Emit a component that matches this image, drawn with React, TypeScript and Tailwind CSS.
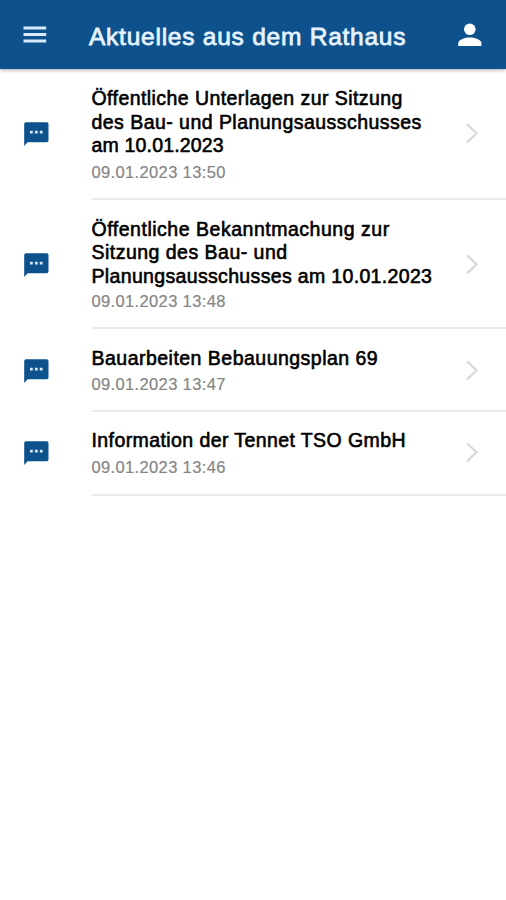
import React from "react";

type Line = { text: string; spacing: string };
type Entry = { lines: Line[]; date: string; row: string; body: string; side: string; dateGap: string };

const entries: Entry[] = [
  {
    lines: [
      { text: "Öffentliche Unterlagen zur Sitzung", spacing: "tracking-[0.43px]" },
      { text: "des Bau- und Planungsausschusses", spacing: "tracking-[0.46px]" },
      { text: "am 10.01.2023", spacing: "tracking-[0.17px]" },
    ],
    date: "09.01.2023 13:50",
    row: "h-[131px]",
    body: "pt-[18px]",
    side: "pt-[53px]",
    dateGap: "mt-[4px]",
  },
  {
    lines: [
      { text: "Öffentliche Bekanntmachung zur", spacing: "tracking-[0.52px]" },
      { text: "Sitzung des Bau- und", spacing: "tracking-[0.48px]" },
      { text: "Planungsausschusses am 10.01.2023", spacing: "tracking-[0.34px]" },
    ],
    date: "09.01.2023 13:48",
    row: "h-[129px]",
    body: "pt-[17.5px]",
    side: "pt-[53px]",
    dateGap: "mt-[2.5px]",
  },
  {
    lines: [{ text: "Bauarbeiten Bebauungsplan 69", spacing: "tracking-[0.48px]" }],
    date: "09.01.2023 13:47",
    row: "h-[83px]",
    body: "pt-[18px]",
    side: "pt-[30px]",
    dateGap: "mt-[3px]",
  },
  {
    lines: [{ text: "Information der Tennet TSO GmbH", spacing: "tracking-[0.41px]" }],
    date: "09.01.2023 13:46",
    row: "h-[84px]",
    body: "pt-[17px]",
    side: "pt-[29px]",
    dateGap: "mt-[4px]",
  },
];

function MessageIcon() {
  return (
    <svg width="25" height="25" viewBox="0 0 25 25" className="block">
      <path d="M2 0.3H22.8a1.7 1.7 0 0 1 1.7 1.7V18.6a1.7 1.7 0 0 1-1.7 1.7H3.6L0.2 24V2A1.8 1.8 0 0 1 2 0.3Z" fill="#0d528d" />
      <path d="M6 8.8h2.8v2.7H6zM10.9 8.8h2.8v2.7h-2.8zM15.8 8.8h2.8v2.7h-2.8z" fill="#d9e8f6" />
    </svg>
  );
}

function Chevron() {
  return (
    <svg width="14" height="22" viewBox="0 0 14 22" className="block">
      <path d="M1 2.2L10.5 11.3L1 20.4" fill="none" stroke="#d8d8d8" strokeWidth="2.2" />
    </svg>
  );
}

export default function App() {
  return (
    <div className="flex h-[900px] w-[506px] flex-col overflow-hidden bg-white font-['Liberation_Sans',Arial,sans-serif]">
      <header className="relative flex h-[69px] shrink-0 items-start bg-[#0d528d] text-white shadow-[0_1px_4px_rgba(0,0,0,0.35)]">
        <svg width="24" height="18" viewBox="0 0 24 18" className="mt-[26px] ml-[23px] shrink-0">
          <path d="M0.5 0.5h22.7v3H0.5zM0.5 7h22.7v3H0.5zM0.5 13.4h22.7v3H0.5z" fill="#d9eafa" />
        </svg>
        <h1 className="mt-[23px] ml-[42px] grow text-[24.5px] leading-[28px] font-normal tracking-[0.76px] whitespace-nowrap text-[#e6f3ff] [-webkit-text-stroke:0.8px_#e6f3ff]">
          Aktuelles aus dem Rathaus
        </h1>
        <svg width="24" height="24" viewBox="0 0 24 24" className="mt-[23px] mr-[24px] shrink-0">
          <circle cx="11.8" cy="6.3" r="5.8" fill="#fff" />
          <path d="M0.2 23V20.4C0.2 16.6 7.6 14.6 11.8 14.6S23.5 16.6 23.5 20.4V23Z" fill="#fff" />
        </svg>
      </header>
      <main>
        {entries.map((entry) => (
          <article key={entry.date} className={`flex items-stretch ${entry.row}`}>
            <div className={`w-[92px] shrink-0 pl-[24px] ${entry.side}`}>
              <MessageIcon />
            </div>
            <div className="flex grow border-b-2 border-[#ebebeb]">
              <div className={`-ml-[0.5px] w-[374.5px] shrink-0 ${entry.body}`}>
                <h2 className="text-[19.5px] leading-[23.5px] font-normal text-black [-webkit-text-stroke:0.6px_black]">
                  {entry.lines.map((line) => (
                    <span key={line.text} className={`block w-fit whitespace-nowrap ${line.spacing}`}>
                      {line.text}
                    </span>
                  ))}
                </h2>
                <p className={`w-fit text-[16.5px] leading-[20px] tracking-[0.36px] text-[#858585] [-webkit-text-stroke:0.2px_#858585] ${entry.dateGap}`}>
                  {entry.date}
                </p>
              </div>
              <div className={entry.side}>
                <Chevron />
              </div>
            </div>
          </article>
        ))}
      </main>
    </div>
  );
}
